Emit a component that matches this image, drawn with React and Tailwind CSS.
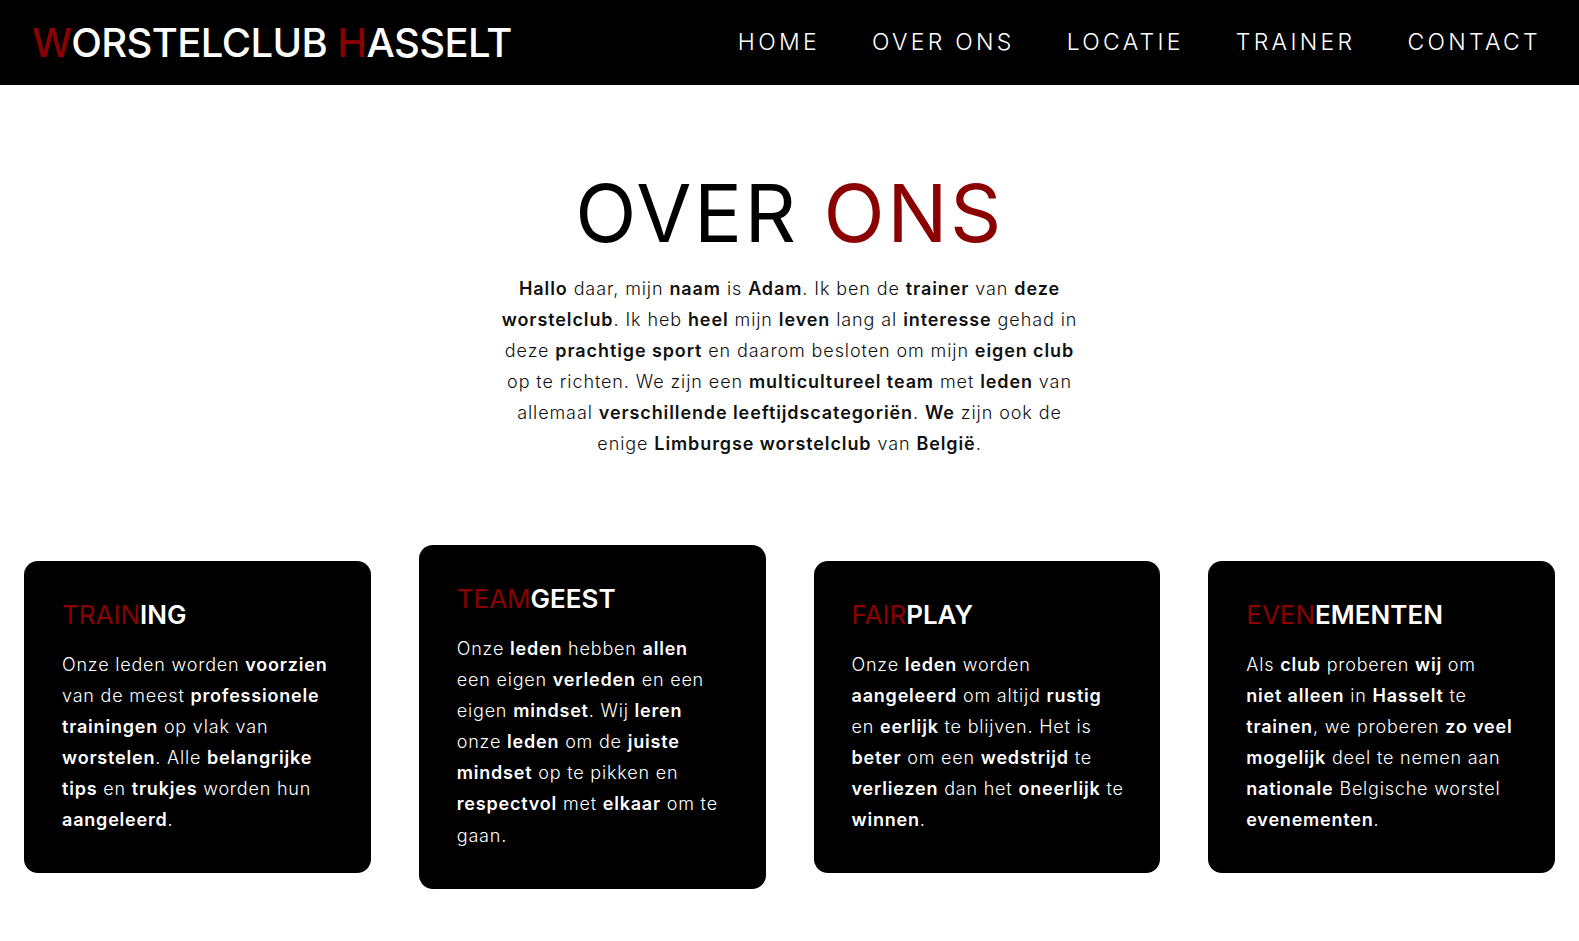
import React from 'react';

const font = { fontFamily: 'Inter, "Noto Sans", sans-serif' };

const navItems = ['HOME', 'OVER ONS', 'LOCATIE', 'TRAINER', 'CONTACT'];

// Each paragraph is a list of lines, each line a list of [text, bold] pairs
const intro = [
  [['Hallo', 1], [' daar, mijn ', 0], ['naam', 1], [' is ', 0], ['Adam', 1], ['. Ik ben de ', 0], ['trainer', 1], [' van ', 0], ['deze', 1]],
  [['worstelclub', 1], ['. Ik heb ', 0], ['heel', 1], [' mijn ', 0], ['leven', 1], [' lang al ', 0], ['interesse', 1], [' gehad in', 0]],
  [['deze ', 0], ['prachtige sport', 1], [' en daarom besloten om mijn ', 0], ['eigen club', 1]],
  [['op te richten. We zijn een ', 0], ['multicultureel team', 1], [' met ', 0], ['leden', 1], [' van', 0]],
  [['allemaal ', 0], ['verschillende leeftijdscategoriën', 1], ['. ', 0], ['We', 1], [' zijn ook de', 0]],
  [['enige ', 0], ['Limburgse worstelclub', 1], [' van ', 0], ['België', 1], ['.', 0]],
];

const cards = [
  {
    red: 'TRAIN',
    white: 'ING',
    lines: [
      [['Onze leden worden ', 0], ['voorzien', 1]],
      [['van de meest ', 0], ['professionele', 1]],
      [['trainingen', 1], [' op vlak van', 0]],
      [['worstelen', 1], ['. Alle ', 0], ['belangrijke', 1]],
      [['tips', 1], [' en ', 0], ['trukjes', 1], [' worden hun', 0]],
      [['aangeleerd', 1], ['.', 0]],
    ],
  },
  {
    red: 'TEAM',
    white: 'GEEST',
    lines: [
      [['Onze ', 0], ['leden', 1], [' hebben ', 0], ['allen', 1]],
      [['een eigen ', 0], ['verleden', 1], [' en een', 0]],
      [['eigen ', 0], ['mindset', 1], ['. Wij ', 0], ['leren', 1]],
      [['onze ', 0], ['leden', 1], [' om de ', 0], ['juiste', 1]],
      [['mindset', 1], [' op te pikken en', 0]],
      [['respectvol', 1], [' met ', 0], ['elkaar', 1], [' om te', 0]],
      [['gaan.', 0]],
    ],
  },
  {
    red: 'FAIR',
    white: 'PLAY',
    lines: [
      [['Onze ', 0], ['leden', 1], [' worden', 0]],
      [['aangeleerd', 1], [' om altijd ', 0], ['rustig', 1]],
      [['en ', 0], ['eerlijk', 1], [' te blijven. Het is', 0]],
      [['beter', 1], [' om een ', 0], ['wedstrijd', 1], [' te', 0]],
      [['verliezen', 1], [' dan het ', 0], ['oneerlijk', 1], [' te', 0]],
      [['winnen', 1], ['.', 0]],
    ],
  },
  {
    red: 'EVEN',
    white: 'EMENTEN',
    lines: [
      [['Als ', 0], ['club', 1], [' proberen ', 0], ['wij', 1], [' om', 0]],
      [['niet alleen', 1], [' in ', 0], ['Hasselt', 1], [' te', 0]],
      [['trainen', 1], [', we proberen ', 0], ['zo veel', 1]],
      [['mogelijk', 1], [' deel te nemen aan', 0]],
      [['nationale', 1], [' Belgische worstel', 0]],
      [['evenementen', 1], ['.', 0]],
    ],
  },
];

const Lines = ({ lines, boldClass }) =>
  lines.map((line, li) => (
    <span key={li} className="block whitespace-nowrap">
      {line.map(([t, b], i) =>
        b ? (
          <span key={i} className={boldClass}>
            {t}
          </span>
        ) : (
          <span key={i}>{t}</span>
        )
      )}
    </span>
  ));

const Card = ({ card }) => (
  <div className="bg-black rounded-[14px] p-[38px] text-white">
    <h3 className="text-[26px] leading-[32px] mb-[18px]">
      <span className="text-[#8b0000] font-normal">{card.red}</span>
      <span className="font-semibold">{card.white}</span>
    </h3>
    <p className="text-[18px] leading-[31.1px] font-light tracking-[0.8px]">
      <Lines lines={card.lines} boldClass="font-semibold" />
    </p>
  </div>
);

export default function App() {
  return (
    <div className="min-h-screen bg-white" style={font}>
      {/* Header */}
      <header className="h-[85px] bg-black flex items-center justify-between pl-8 pr-[38px]">
        <div className="text-[40px] font-medium tracking-[-0.6px] text-white leading-none">
          <span className="text-[#8b0000]">W</span>ORSTELCLUB <span className="text-[#8b0000]">H</span>ASSELT
        </div>
        <nav className="flex items-center gap-[52px]">
          {navItems.map((item) => (
            <a key={item} href="#" className="text-white text-[23px] font-light tracking-[3.3px]">
              {item}
            </a>
          ))}
        </nav>
      </header>

      {/* Over ons */}
      <section className="pt-[88px] flex flex-col items-center">
        <h1 className="text-[80px] leading-none font-normal tracking-[2.5px] text-black">
          OVER <span className="text-[#8b0000]">ONS</span>
        </h1>
        <p className="mt-5 text-center text-[18px] leading-[31px] font-light tracking-[0.9px] text-[#111]">
          <Lines lines={intro} boldClass="font-semibold" />
        </p>
      </section>

      {/* Cards */}
      <section className="mt-[86px] px-6 grid grid-cols-4 gap-12 items-center">
        {cards.map((c) => (
          <Card key={c.red} card={c} />
        ))}
      </section>
    </div>
  );
}
